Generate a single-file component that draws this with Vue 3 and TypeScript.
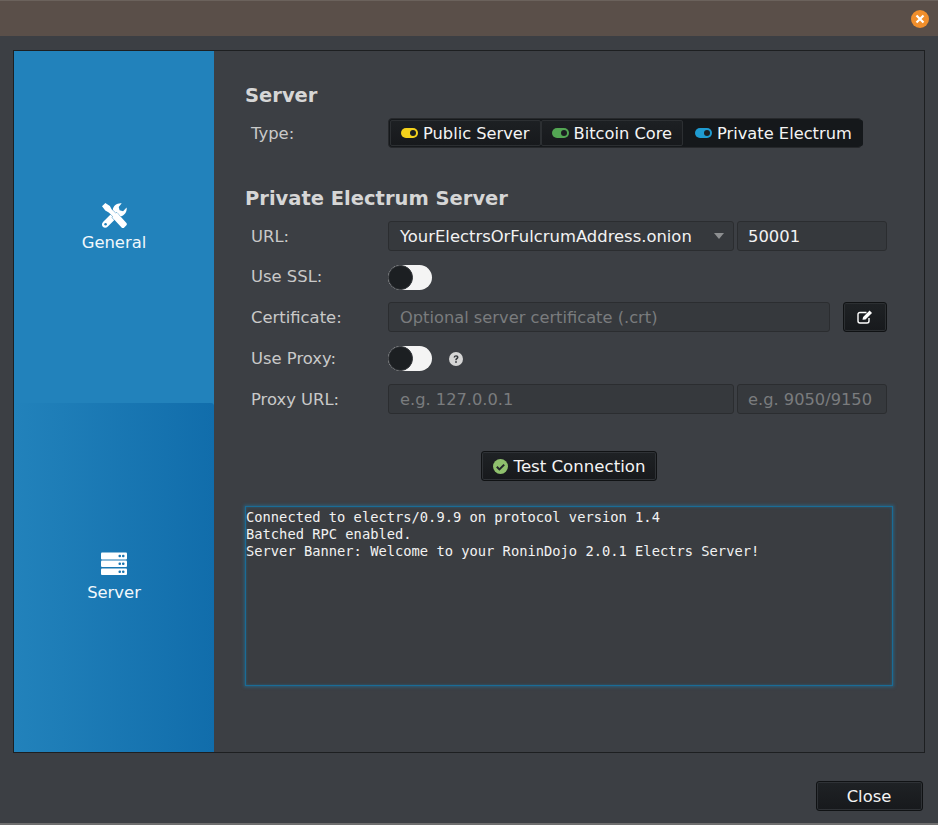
<script setup lang="ts">
interface Segment { label: string; color: string; active: boolean }
const segments: Segment[] = [
  { label: 'Public Server', color: '#f4d21c', active: false },
  { label: 'Bitcoin Core', color: '#53a653', active: false },
  { label: 'Private Electrum', color: '#1f9bd1', active: true },
]
const logLines = [
  'Connected to electrs/0.9.9 on protocol version 1.4',
  'Batched RPC enabled.',
  'Server Banner: Welcome to your RoninDojo 2.0.1 Electrs Server!',
]
</script>

<template>
  <div class="window">
    <header class="titlebar">
      <span class="close-dot">
        <svg width="10" height="10" viewBox="0 0 10 10"><path d="M1.5 1.5l7 7M8.5 1.5l-7 7" stroke="#fff" stroke-width="2.2" /></svg>
      </span>
    </header>

    <main class="panel">
      <nav class="sidebar">
        <div class="tab">
          <svg class="tab-icon wrench" width="25" height="25" viewBox="0 0 26 26">
            <!-- wrench -->
            <path d="M20.500 0.300C16.500 -0.500 11.500 2.500 11.200 7.200c0 .8.100 1.500.3 2.100L1.300 19.500c-1.700 1.700-1.700 3.800-.4 5.200 1.400 1.400 3.600 1.300 5.200-.3L16.500 14c4.800.9 9-2.800 9.200-7.700 0-.6 0-1.100-.1-1.500l-3.700 3.700-3.600-.9-.9-3.400z" fill="#fff" />
            <circle cx="3.700" cy="22.200" r="1.300" fill="#2282bb" />
            <!-- screwdriver -->
            <path d="M0 3.500L3.500 0l4.700 3 1.800 3.500 4.300 4.300 1.200-.8 9.900 10.900c.6.700.6 1.700 0 2.300l-2.500 2.500c-.7.6-1.700.6-2.300 0L10.700 15.200l.8-1.200-4.500-4.200-3.600-1.900z" fill="#fff" stroke="#2282bb" stroke-width="1" paint-order="stroke" />
          </svg>
          <span>General</span>
        </div>
        <div class="tab tab-active">
          <svg class="tab-icon" width="26" height="24" viewBox="0 0 26 24">
            <g fill="#fff">
              <rect y="0.500" width="26" height="7" rx="1" />
              <rect y="8.500" width="26" height="6.500" rx="1" />
              <rect y="16.500" width="26" height="6.500" rx="1" />
            </g>
            <g fill="#1a75b0">
              <rect x="17.500" y="2.800" width="2.500" height="2.500" rx="1" />
              <rect x="21" y="2.800" width="2.500" height="2.500" rx="1" />
              <rect x="17.500" y="10.500" width="2.500" height="2.500" rx="1" />
              <rect x="21" y="10.500" width="2.500" height="2.500" rx="1" />
              <rect x="17.500" y="18.500" width="2.500" height="2.500" rx="1" />
              <rect x="21" y="18.500" width="2.500" height="2.500" rx="1" />
            </g>
          </svg>
          <span>Server</span>
        </div>
      </nav>

      <section class="content">
        <h2 class="heading">Server</h2>
        <div class="form">
          <label class="label">Type:</label>
          <div class="segments">
            <button v-for="s in segments" :key="s.label" class="segment" :class="{ on: s.active }">
              <span class="led" :style="{ background: s.color }"></span>{{ s.label }}
            </button>
          </div>
        </div>

        <h2 class="heading second">Private Electrum Server</h2>
        <div class="form">
          <label class="label low">URL:</label>
          <div class="split">
            <div class="field select">
              <span>YourElectrsOrFulcrumAddress.onion</span>
              <i class="caret"></i>
            </div>
            <input class="field port" value="50001" />
          </div>

          <label class="label">Use SSL:</label>
          <div class="line"><span class="toggle"><i></i></span></div>

          <label class="label">Certificate:</label>
          <div class="cert">
            <input class="field grow" placeholder="Optional server certificate (.crt)" />
            <button class="edit">
              <svg width="17" height="14" viewBox="0 0 17 14">
                <path d="M9.500 2.500H3C1.800 2.500 1 3.300 1 4.500V11c0 1.200.8 2 2 2h7c1.200 0 2-.8 2-2V8" fill="none" stroke="#fff" stroke-width="1.400" />
                <path d="M5.500 9.800l.6-2.800L12.600.6l2.400 2.400-6.500 6.400z" fill="#fff" />
              </svg>
            </button>
          </div>

          <label class="label">Use Proxy:</label>
          <div class="line">
            <span class="toggle"><i></i></span>
            <svg class="help" width="14" height="14" viewBox="0 0 14 14">
              <circle cx="7" cy="7" r="7" fill="#d6d6d6" />
              <path d="M4.600 5.400C4.800 4 5.800 3.200 7.100 3.200c1.400 0 2.400.9 2.400 2 0 1.800-1.800 1.600-1.800 3H6.200c0-2.200 1.700-2 1.700-3 0-.4-.4-.7-.9-.7-.5 0-.9.300-1 .9z" fill="#33363a" />
              <rect x="6.200" y="9.200" width="1.600" height="1.600" fill="#33363a" />
            </svg>
          </div>

          <label class="label low">Proxy URL:</label>
          <div class="split">
            <input class="field" placeholder="e.g. 127.0.0.1" />
            <input class="field port" placeholder="e.g. 9050/9150" />
          </div>
        </div>

        <div class="test-row">
          <button class="btn test">
            <svg width="15" height="15" viewBox="0 0 15 15">
              <circle cx="7.500" cy="7.500" r="7.500" fill="#8fc06d" />
              <path d="M3.800 7.800l2.600 2.600 4.800-4.800" fill="none" stroke="#22262a" stroke-width="2" />
            </svg>
            Test Connection
          </button>
        </div>

        <div class="log"><div v-for="l in logLines" :key="l">{{ l }}</div></div>
      </section>
    </main>

    <footer class="footer">
      <button class="btn close">Close</button>
    </footer>
  </div>
</template>

<style>
html, body { margin: 0; padding: 0; background: #3c3f44; }
</style>

<style scoped>
.window {
  width: 938px;
  height: 825px;
  box-sizing: border-box;
  display: flex;
  flex-direction: column;
  background: #3c3f44;
  border-bottom: 2px solid #6e6e6e;
  font-family: "DejaVu Sans", sans-serif;
  font-size: 16.400px;
  color: #fff;
  overflow: hidden;
}
.titlebar {
  height: 36px;
  box-sizing: border-box;
  flex: none;
  background: #5a4f49;
  border-top: 1px solid #6b625c;
  display: flex;
  align-items: center;
  justify-content: flex-end;
  padding-right: 9px;
}
.close-dot {
  width: 18px;
  height: 18px;
  border-radius: 50%;
  background: #f18f2c;
  display: flex;
  align-items: center;
  justify-content: center;
}
.panel {
  margin: 14px 13px 0;
  height: 703px;
  box-sizing: border-box;
  border: 1px solid #1d1f21;
  display: flex;
  flex: none;
}
.sidebar {
  width: 200px;
  flex: none;
  display: flex;
  flex-direction: column;
  background: #2282bb;
}
.tab {
  flex: 1;
  display: flex;
  flex-direction: column;
  align-items: center;
  justify-content: center;
  gap: 5px;
  padding-top: 2px;
  color: #f2f8fc;
}
.tab-active {
  background: linear-gradient(90deg, #2282bb, #116dab);
  border-top-right-radius: 3px;
  gap: 7px;
  padding-top: 0;
}
.tab-icon { display: block; }
.wrench { margin-left: 1px; }
.content {
  flex: 1;
  min-width: 0;
  padding: 34px 31px 0;
}
.heading {
  margin: 0 0 11px;
  font-size: 19.500px;
  line-height: 22px;
  font-weight: 700;
  color: #d6d6d6;
}
.second { margin-top: 40px; margin-bottom: 10.900px; }
.form {
  display: grid;
  grid-template-columns: 137px 1fr;
  grid-auto-rows: 30px;
  row-gap: 10.750px;
  padding: 0 8px 0 6px;
}
.label {
  display: flex;
  align-items: center;
  color: #c9c9c9;
}
.low { padding-top: 1px; }
.segments {
  display: flex;
  width: 474px;
  height: 30px;
  box-sizing: border-box;
  padding: 1px;
  background: #15181b;
  border: 1px solid #26282b;
  border-radius: 4px;
}
.segment {
  display: flex;
  align-items: center;
  gap: 5px;
  padding: 0 10px 0 10px;
  background: linear-gradient(#1d2023, #17191c);
  border: 1px solid #2c2f32;
  color: #f4f4f4;
  font: inherit;
  font-size: 16.250px;
  border-radius: 2px;
  white-space: nowrap;
}
.segment.on {
  background: #15181b;
  border-color: transparent;
  padding-left: 11px;
}
.led {
  position: relative;
  width: 17px;
  height: 10px;
  border-radius: 5px;
}
.led::after {
  content: "";
  position: absolute;
  right: 2px;
  top: 2px;
  width: 6px;
  height: 6px;
  border-radius: 50%;
  background: #1b1e21;
}
.split { display: flex; gap: 3px; }
.split > :first-child { width: 346px; flex: none; }
.split > .field { padding-top: 1px; }
.field {
  box-sizing: border-box;
  min-width: 0;
  height: 30px;
  padding: 0 10px;
  background: #36393d;
  border: 1px solid #2b2d30;
  border-radius: 3px;
  color: #f2f2f2;
  font: inherit;
  outline: none;
  display: flex;
  align-items: center;
}
.split > :first-child, .grow { padding-left: 11px; }
.field::placeholder { color: #7a7c7e; opacity: 1; font-size: 16.250px; }
.port { flex: 1; width: 150px; }
.select { justify-content: space-between; padding-right: 9px; }
.caret {
  width: 0;
  height: 0;
  border: 5px solid transparent;
  border-top: 6px solid #8d8f91;
  border-bottom: 0;
}
.line { display: flex; align-items: center; gap: 17px; padding-top: 1px; }
.toggle {
  position: relative;
  display: block;
  width: 44px;
  height: 25px;
  border-radius: 13px;
  background: #f4f4f4;
}
.toggle i {
  position: absolute;
  left: 0;
  top: 0;
  width: 25px;
  height: 25px;
  box-sizing: border-box;
  border-radius: 50%;
  background: #1c1f22;
  border: 1px solid #33363a;
}
.cert { display: flex; gap: 13px; }
.grow { flex: 1; }
.edit {
  width: 44px;
  height: 30px;
  flex: none;
  padding: 0;
  display: flex;
  align-items: center;
  justify-content: center;
  background: linear-gradient(#1f2225, #17191c);
  border: 1px solid #101214;
  border-radius: 3px;
  box-shadow: 0 0 0 1px #2c2f32 inset;
}
.test-row {
  margin-top: 37px;
  display: flex;
  justify-content: center;
}
.btn {
  height: 30px;
  box-sizing: border-box;
  background: linear-gradient(#1f2225, #17191c);
  border: 1px solid #101214;
  border-radius: 3px;
  box-shadow: 0 0 0 1px #2f3236 inset;
  color: #f4f4f4;
  font: inherit;
  display: flex;
  align-items: center;
  justify-content: center;
}
.test { width: 176px; gap: 6px; padding: 1px 0 0; font-size: 16.600px; }
.log {
  margin-top: 25px;
  height: 180px;
  box-sizing: border-box;
  padding: 2px 0 0;
  background: #3a3d41;
  border: 1px solid #1a6c96;
  box-shadow: 0 0 3px 1px rgba(30, 120, 170, .55), inset 0 0 3px rgba(30, 120, 170, .5);
  font-family: "DejaVu Sans Mono", monospace;
  font-size: 13.750px;
  line-height: 17.300px;
  color: #f2f2f2;
  white-space: pre;
}
.footer {
  flex: 1;
  display: flex;
  align-items: flex-start;
  justify-content: flex-end;
  padding: 28px 15px 0 0;
}
.close { width: 107px; height: 30px; padding: 0 1px 0 0; }
</style>
